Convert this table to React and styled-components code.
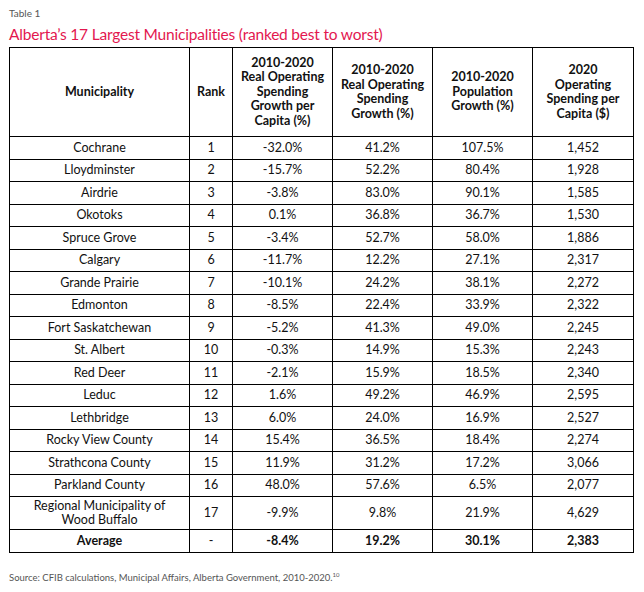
import React from 'react';
import styled, { createGlobalStyle } from 'styled-components';

const GlobalStyle = createGlobalStyle`
  html, body {
    margin: 0;
    padding: 0;
    background: #ffffff;
  }
  body {
    font-family: Lato, "Open Sans", "Liberation Sans", sans-serif;
    color: #111111;
  }
`;

const Page = styled.div`
  width: 644px;
  height: 592px;
  padding: 6px 0 0 9px;
  box-sizing: border-box;
  display: flex;
  flex-direction: column;
`;

const Caption = styled.div`
  font-size: 10px;
  color: #555555;
  line-height: 14px;
`;

const Title = styled.h1`
  margin: 4px 0 0 0;
  font-size: 15.5px;
  letter-spacing: -0.2px;
  font-weight: 400;
  color: #e3174f;
  line-height: 20px;
`;

const Table = styled.table`
  margin-top: 3px;
  width: 624px;
  border-collapse: collapse;
  table-layout: fixed;
  border: 1.5px solid #000;
`;

const HeadCell = styled.th`
  border: 1.5px solid #000;
  height: 88px;
  padding: 0 2px;
  font-size: 12.5px;
  line-height: 14.5px;
  font-weight: 700;
  text-align: center;
  color: #111;
`;

const Cell = styled.td`
  border: 1.5px solid #000;
  height: ${p => (p.$tall ? 32 : 21.5)}px;
  padding: 0 4px;
  font-size: 12.5px;
  line-height: 14px;
  text-align: center;
  font-weight: ${p => (p.$bold ? 700 : 400)};
  color: #111;
`;

const Source = styled.div`
  margin-top: 18px;
  font-size: 9.5px;
  color: #555555;
  sup {
    font-size: 6px;
  }
`;

const widths = [180, 43, 100, 100, 100, 101];

const headers = [
  ['Municipality'],
  ['Rank'],
  ['2010-2020', 'Real Operating', 'Spending', 'Growth per', 'Capita (%)'],
  ['2010-2020', 'Real Operating', 'Spending', 'Growth (%)'],
  ['2010-2020', 'Population', 'Growth (%)'],
  ['2020', 'Operating', 'Spending per', 'Capita ($)'],
];

const rows = [
  ['Cochrane', '1', '-32.0%', '41.2%', '107.5%', '1,452'],
  ['Lloydminster', '2', '-15.7%', '52.2%', '80.4%', '1,928'],
  ['Airdrie', '3', '-3.8%', '83.0%', '90.1%', '1,585'],
  ['Okotoks', '4', '0.1%', '36.8%', '36.7%', '1,530'],
  ['Spruce Grove', '5', '-3.4%', '52.7%', '58.0%', '1,886'],
  ['Calgary', '6', '-11.7%', '12.2%', '27.1%', '2,317'],
  ['Grande Prairie', '7', '-10.1%', '24.2%', '38.1%', '2,272'],
  ['Edmonton', '8', '-8.5%', '22.4%', '33.9%', '2,322'],
  ['Fort Saskatchewan', '9', '-5.2%', '41.3%', '49.0%', '2,245'],
  ['St. Albert', '10', '-0.3%', '14.9%', '15.3%', '2,243'],
  ['Red Deer', '11', '-2.1%', '15.9%', '18.5%', '2,340'],
  ['Leduc', '12', '1.6%', '49.2%', '46.9%', '2,595'],
  ['Lethbridge', '13', '6.0%', '24.0%', '16.9%', '2,527'],
  ['Rocky View County', '14', '15.4%', '36.5%', '18.4%', '2,274'],
  ['Strathcona County', '15', '11.9%', '31.2%', '17.2%', '3,066'],
  ['Parkland County', '16', '48.0%', '57.6%', '6.5%', '2,077'],
];

export default function App() {
  return (
    <>
      <GlobalStyle />
      <Page>
        <Caption>Table 1</Caption>
        <Title>Alberta’s 17 Largest Municipalities (ranked best to worst)</Title>
        <Table>
          <colgroup>
            {widths.map((w, i) => (
              <col key={i} style={{ width: w }} />
            ))}
          </colgroup>
          <thead>
            <tr>
              {headers.map((lines, i) => (
                <HeadCell key={i}>
                  {lines.map((l, j) => (
                    <React.Fragment key={j}>
                      {j > 0 && <br />}
                      {l}
                    </React.Fragment>
                  ))}
                </HeadCell>
              ))}
            </tr>
          </thead>
          <tbody>
            {rows.map(r => (
              <tr key={r[0]}>
                {r.map((c, i) => (
                  <Cell key={i}>{c}</Cell>
                ))}
              </tr>
            ))}
            <tr>
              <Cell $tall>
                Regional Municipality of
                <br />
                Wood Buffalo
              </Cell>
              <Cell $tall>17</Cell>
              <Cell $tall>-9.9%</Cell>
              <Cell $tall>9.8%</Cell>
              <Cell $tall>21.9%</Cell>
              <Cell $tall>4,629</Cell>
            </tr>
            <tr>
              <Cell $bold>Average</Cell>
              <Cell>-</Cell>
              <Cell $bold>-8.4%</Cell>
              <Cell $bold>19.2%</Cell>
              <Cell $bold>30.1%</Cell>
              <Cell $bold>2,383</Cell>
            </tr>
          </tbody>
        </Table>
        <Source>
          Source: CFIB calculations, Municipal Affairs, Alberta Government, 2010-2020.<sup>10</sup>
        </Source>
      </Page>
    </>
  );
}
